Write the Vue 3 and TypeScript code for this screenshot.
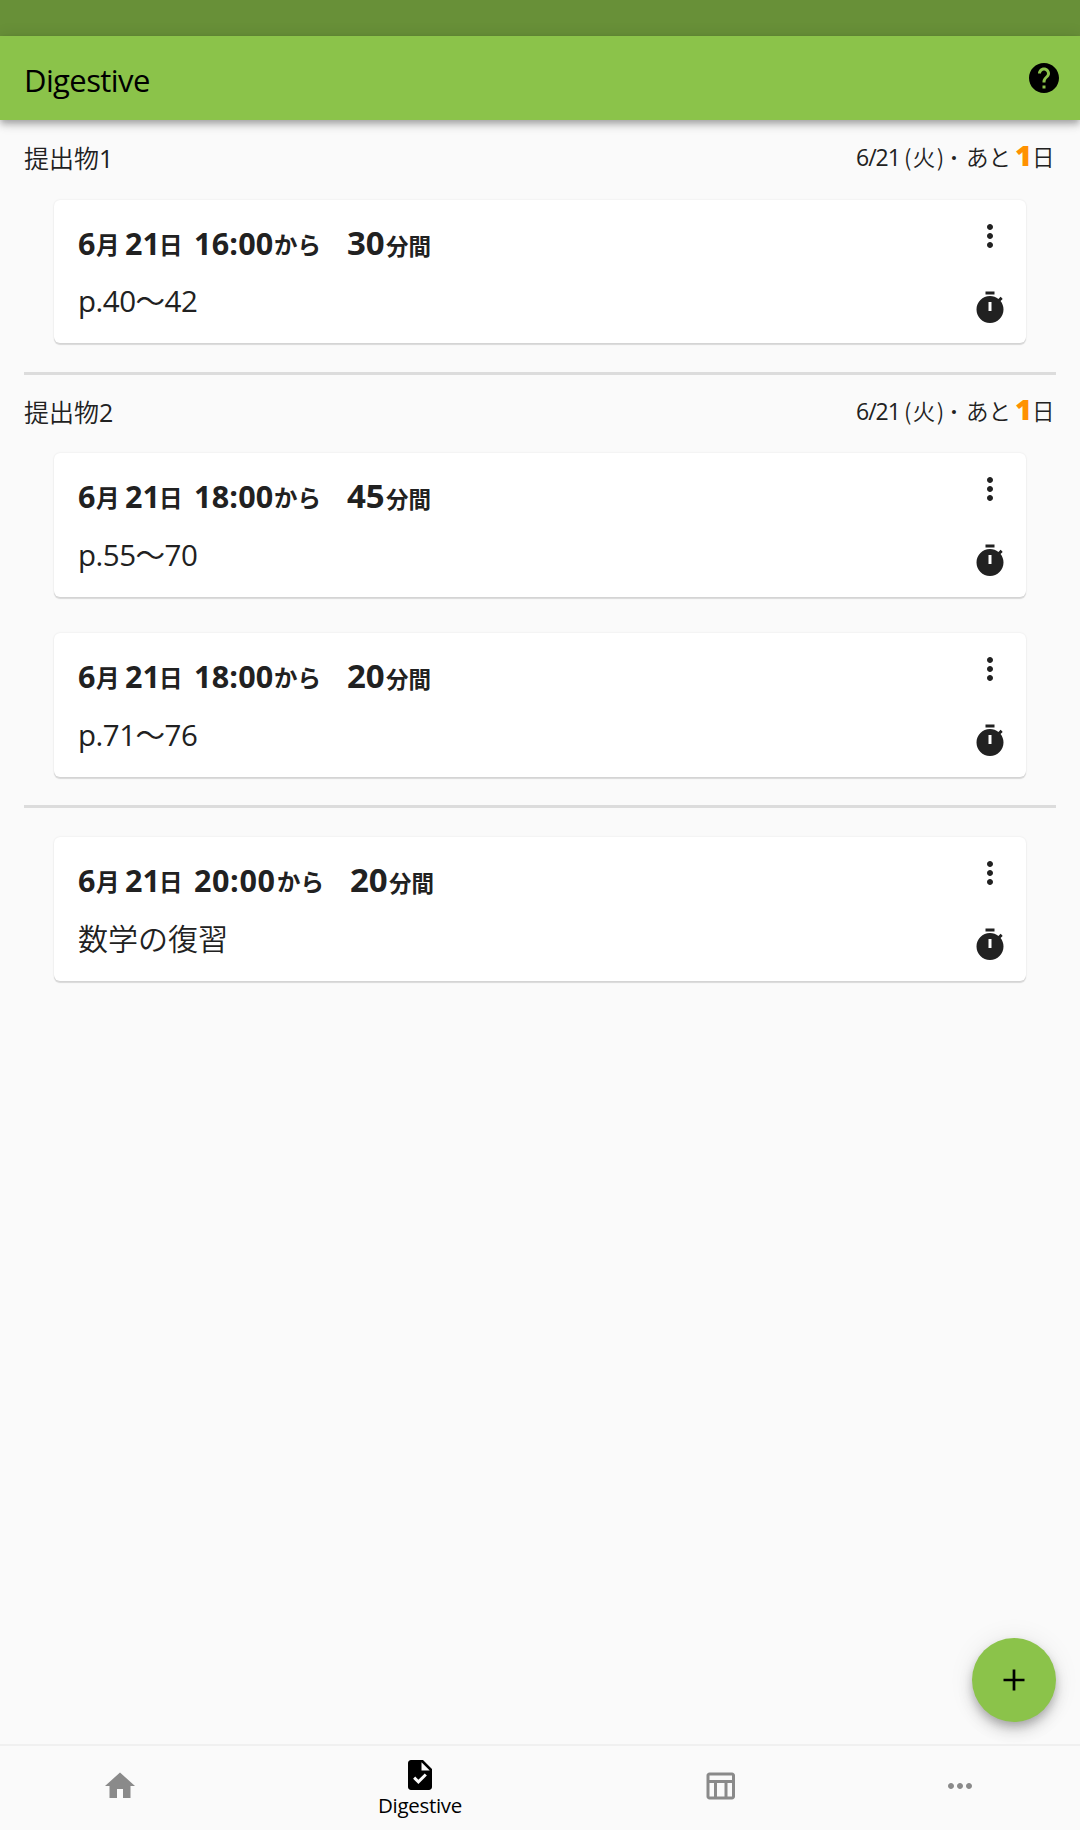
<script setup lang="ts">
interface Task {
  time: string
  minutes: string
  note: string
  plain?: boolean
}
interface Section {
  title?: string
  number?: string
  tasks: Task[]
}

const sections: Section[] = [
  { title: '提出物', number: '1', tasks: [{ time: '16:00', minutes: '30', note: 'p.40〜42' }] },
  {
    title: '提出物',
    number: '2',
    tasks: [
      { time: '18:00', minutes: '45', note: 'p.55〜70' },
      { time: '18:00', minutes: '20', note: 'p.71〜76' },
    ],
  },
  { tasks: [{ time: '20:00', minutes: '20', note: '数学の復習', plain: true }] },
]
</script>

<template>
  <div class="app">
    <div class="status"></div>
    <header class="bar">
      <h1>Digestive</h1>
      <svg class="help" viewBox="0 0 24 24" width="36" height="36">
        <path d="M12 2C6.480 2 2 6.480 2 12s4.480 10 10 10 10-4.480 10-10S17.520 2 12 2zm1 17h-2v-2h2v2zm2.070-7.750l-.9.920C13.450 12.900 13 13.500 13 15h-2v-.5c0-1.100.450-2.100 1.170-2.830l1.240-1.260c.370-.360.590-.860.590-1.410 0-1.100-.9-2-2-2s-2 .9-2 2H8c0-2.210 1.790-4 4-4s4 1.790 4 4c0 .880-.360 1.680-.930 2.250z" />
      </svg>
    </header>

    <main>
      <section v-for="(section, i) in sections" :key="i" :class="{ untitled: !section.title }">
        <div v-if="section.title" class="heading">
          <h2>{{ section.title }}<span class="number">{{ section.number }}</span></h2>
          <div class="due">
            <span class="date">6/21</span>
            <span class="weekday">(火)</span>
            <span class="dot">·</span>
            <span class="left">あと</span>
            <strong>1</strong>
            <span class="unit">日</span>
          </div>
        </div>
        <article v-for="(task, j) in section.tasks" :key="j" class="card">
          <div class="text">
            <div class="when">
              <span class="num month">6</span>
              <span class="cjk month-unit">月</span>
              <span class="num day">21</span>
              <span class="cjk day-unit">日</span>
              <span class="num time" :class="{ wide: task.plain }">{{ task.time }}</span>
              <span class="cjk from">から</span>
              <span class="minutes">{{ task.minutes }}</span>
              <span class="cjk minutes-unit">分間</span>
            </div>
            <p class="note" :class="{ pages: !task.plain }">{{ task.note }}</p>
          </div>
          <div class="actions">
            <svg viewBox="0 0 24 24" width="36" height="36">
              <path d="M12 8c1.100 0 2-.9 2-2s-.9-2-2-2-2 .9-2 2 .9 2 2 2zm0 2c-1.100 0-2 .9-2 2s.9 2 2 2 2-.9 2-2-.9-2-2-2zm0 6c-1.100 0-2 .9-2 2s.9 2 2 2 2-.9 2-2-.9-2-2-2z" />
            </svg>
            <svg viewBox="0 0 24 24" width="36" height="36">
              <path fill-rule="evenodd" d="M9 1h6v2H9zM19.030 7.390l1.420-1.420c-.430-.510-.9-.990-1.410-1.410l-1.420 1.420C16.070 4.740 14.120 4 12 4c-4.970 0-9 4.030-9 9s4.020 9 9 9 9-4.030 9-9c0-2.120-.740-4.070-1.970-5.610zM13 14h-2V8h2z" />
            </svg>
          </div>
        </article>
      </section>
    </main>

    <button class="fab" aria-label="+">
      <svg viewBox="0 0 24 24" width="36" height="36"><path d="M19 12.900h-6.100v6.100h-1.800v-6.100H5v-1.800h6.100V5h1.800v6.100H19z" /></svg>
    </button>

    <nav>
      <a class="tab">
        <svg viewBox="0 0 24 24" width="36" height="36"><path d="M10 20v-6h4v6h5v-8h3L12 3 2 12h3v8z" /></svg>
      </a>
      <a class="tab active">
        <svg viewBox="0 0 24 24" width="36" height="36">
          <path fill-rule="evenodd" d="M14 2H6c-1.100 0-1.990.9-1.990 2L4 20c0 1.100.890 2 1.990 2H18c1.100 0 2-.9 2-2V8l-6-6zm-3.060 16L7.400 14.460l1.410-1.410 2.120 2.120 4.240-4.240 1.410 1.410L10.940 18zM13 9V3.500L18.500 9H13z" />
        </svg>
        <span>Digestive</span>
      </a>
      <a class="tab">
        <svg viewBox="0 0 24 24" width="36" height="36">
          <path fill-rule="evenodd" d="M20 3H5c-1.100 0-2 .9-2 2v14c0 1.100.9 2 2 2h15c1.100 0 2-.9 2-2V5c0-1.100-.9-2-2-2zm0 2v3H5V5h15zm-5 14h-5v-9h5v9zM5 10h3v9H5v-9zm12 9v-9h3v9h-3z" />
        </svg>
      </a>
      <a class="tab">
        <svg viewBox="0 0 24 24" width="36" height="36">
          <path d="M6 10c-1.100 0-2 .9-2 2s.9 2 2 2 2-.9 2-2-.9-2-2-2zm12 0c-1.100 0-2 .9-2 2s.9 2 2 2 2-.9 2-2-.9-2-2-2zm-6 0c-1.100 0-2 .9-2 2s.9 2 2 2 2-.9 2-2-.9-2-2-2z" />
        </svg>
      </a>
    </nav>
  </div>
</template>

<style>
body {
  margin: 0;
}
</style>

<style scoped>
.app {
  width: 1080px;
  height: 1830px;
  display: flex;
  flex-direction: column;
  position: relative;
  overflow: hidden;
  background: #fafafa;
  color: #212121;
  font-family: 'Open Sans', 'Noto Sans CJK JP', sans-serif;
  font-weight: 350;
}
svg {
  display: block;
  fill: currentColor;
}
h1,
h2,
p {
  margin: 0;
  font-weight: inherit;
}
.status {
  height: 36px;
  background: #689038;
  flex: none;
}
.bar {
  height: 84px;
  flex: none;
  display: flex;
  justify-content: space-between;
  align-items: center;
  box-sizing: border-box;
  padding: 0 18px 0 24px;
  background: #8bc34a;
  color: #000;
  box-shadow: 0 3px 6px -1px rgba(0, 0, 0, 0.2), 0 6px 7px rgba(0, 0, 0, 0.14), 0 1px 15px rgba(0, 0, 0, 0.12);
}
h1 {
  font-size: 31px;
  font-weight: 400;
  line-height: 40px;
  letter-spacing: -0.6px;
  padding-top: 4px;
}
main {
  flex: 1;
}
section {
  padding: 0 24px 28px;
  position: relative;
}
section:first-child {
  padding-bottom: 29px;
}
section:first-child .card {
  height: 143px;
}
section + section {
  border-top: 3px solid transparent;
}
section + section::before {
  content: '';
  position: absolute;
  left: 24px;
  right: 24px;
  top: -3px;
  height: 3px;
  background: #dcdcdc;
}
.heading {
  display: flex;
  justify-content: space-between;
  height: 80px;
  line-height: 76px;
  box-sizing: border-box;
}
section + section .heading {
  height: 78px;
  line-height: 74px;
}
h2 {
  font-size: 25px;
}
.number {
  font-weight: 400;
}
.due {
  display: flex;
  align-items: baseline;
  margin-top: -2px;
  font-size: 22.5px;
  white-space: nowrap;
}
.date {
  width: 48px;
  font-size: 23px;
  font-weight: 400;
  letter-spacing: -1px;
}
.weekday {
  width: 42px;
  font-family: 'Noto Sans CJK JP', sans-serif;
  letter-spacing: 1.4px;
}
.dot {
  width: 16px;
  text-align: center;
  margin-right: 4px;
  font-weight: 700;
}
.left {
  width: 49px;
}
.due strong {
  width: 17px;
  font-size: 29px;
  line-height: 72px;
  font-weight: 800;
  color: #ff9100;
}
.unit {
  width: 24px;
}
.card {
  display: flex;
  justify-content: space-between;
  box-sizing: border-box;
  height: 144px;
  margin: 0 30px;
  padding: 18px 18px 0 24px;
  border-radius: 6px;
  background: #fff;
  box-shadow: 0 2px 1px rgba(0, 0, 0, 0.13), 0 0 2px rgba(0, 0, 0, 0.1);
}
.card + .card {
  margin-top: 36px;
}
.untitled {
  padding-top: 29px;
}
.when {
  display: flex;
  align-items: baseline;
  height: 56px;
  line-height: 50px;
  font-weight: 700;
  white-space: nowrap;
}
section:first-child .when {
  height: 55px;
}
.num {
  font-size: 30.5px;
}
.cjk {
  font-size: 23.5px;
  position: relative;
  top: -1px;
}
.month {
  width: 18px;
}
.month-unit {
  width: 29px;
}
.day {
  width: 34px;
}
.day-unit {
  width: 35px;
}
.time {
  width: 80px;
  letter-spacing: 0.2px;
}
.time.wide {
  width: 83px;
  letter-spacing: 0.6px;
}
.from {
  width: 73px;
}
.minutes {
  font-size: 33px;
  width: 39px;
}
.minutes-unit {
  font-size: 22.5px;
  top: 0;
}
.note {
  font-size: 30px;
  line-height: 56px;
}
.note.pages {
  font-size: 29.5px;
  font-weight: 400;
  letter-spacing: -0.5px;
}
.actions {
  display: flex;
  flex-direction: column;
  gap: 36px;
}
.fab {
  position: absolute;
  left: 972px;
  top: 1638px;
  width: 84px;
  height: 84px;
  padding: 0;
  border: 0;
  border-radius: 50%;
  display: grid;
  place-items: center;
  background: #8bc34a;
  color: #000;
  box-shadow: 0 5px 8px -1px rgba(0, 0, 0, 0.2), 0 9px 15px rgba(0, 0, 0, 0.14), 0 1px 27px rgba(0, 0, 0, 0.08);
}
nav {
  display: flex;
  flex: none;
  height: 86px;
  border-top: 2px solid #f0f0f0;
  box-sizing: border-box;
  color: #8a8a8a;
}
.tab {
  width: 240px;
  box-sizing: border-box;
  padding-bottom: 4px;
  display: flex;
  flex-direction: column;
  align-items: center;
  justify-content: center;
}
.tab.active {
  width: 360px;
  color: #000;
  justify-content: flex-start;
  padding-top: 11px;
}
.tab.active span {
  font-size: 20.5px;
  font-weight: 400;
  line-height: 24px;
  letter-spacing: -0.3px;
}
</style>
